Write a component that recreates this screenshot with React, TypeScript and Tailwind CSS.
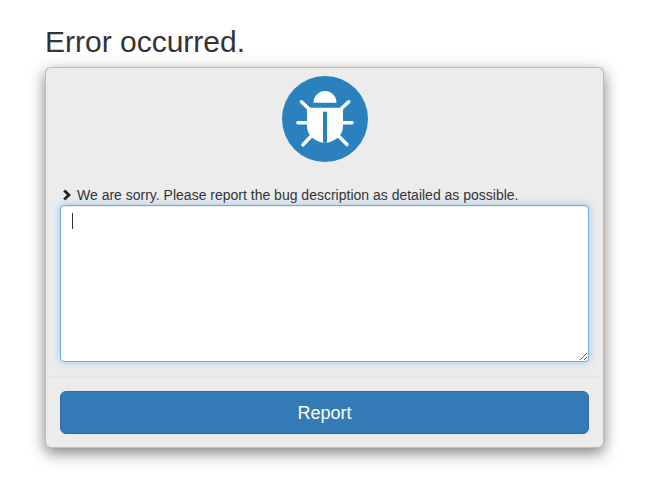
function BugIcon() {
  return (
    <svg width="86" height="86" viewBox="0 0 86 86" className="block">
      <circle cx="43" cy="43" r="43" fill="#2a81bd" />
      <path d="M31.5 26.7a11.5 11.7 0 0 1 23 0z" fill="#fff" />
      <path d="M25 31.7h36v19c0 9-9.500 16-18 16s-18-7-18-16z" fill="#fff" />
      <path d="M41 35.700h4v31h-4z" fill="#2a81bd" />
      <g stroke="#fff" strokeWidth="3.600" strokeLinecap="round" fill="none">
        <path d="M19.500 25.800 28 34" />
        <path d="M66.700 25.800 58 34" />
        <path d="M16 46.700h10" />
        <path d="M70 46.700H60" />
        <path d="M21 68.800l8-8.500" />
        <path d="M65 68.500l-8-8" />
      </g>
    </svg>
  )
}

export default function App() {
  return (
    <div className="w-[648px] h-[500px] bg-white text-[#333] font-['Liberation_Sans',Arial,sans-serif] px-[45px] pt-[20px] overflow-hidden">
      <h1 className="text-[30px] leading-[33px] font-normal h-[47px] pt-[5px]">Error occurred.</h1>
      <div className="w-[559px] h-[381px] bg-[#ececec] border border-black/20 rounded-md shadow-[0_5px_15px_rgba(0,0,0,0.5)]">
        <div className="h-[308px] px-[14px] pt-[8px]">
          <div className="flex justify-center">
            <BugIcon />
          </div>
          <div className="flex items-center mt-[23px] h-[20px] text-[14px] leading-[20px]">
            <svg width="10" height="12" viewBox="0 0 10 12" className="ml-[2px] mr-[5px] shrink-0">
              <path d="M1.200 2.400 3.200 0.500 9 6l-5.800 5.500-2-1.900L5 6z" fill="#222" />
            </svg>
            <span>We are sorry. Please report the bug description as detailed as possible.</span>
          </div>
          <div className="relative mt-[0px]">
            <textarea
              aria-label="Bug description"
              className="block w-[529px] h-[157px] bg-white rounded border border-[#66afe9] outline-none shadow-[inset_0_1px_1px_rgba(0,0,0,0.075),0_0_8px_rgba(102,175,233,0.6)]"
            />
            <span className="absolute left-[12px] top-[8px] w-px h-[16px] bg-[#333]" />
          </div>
        </div>
        <div className="border-t border-[#e5e5e5] px-[14px] pt-[14px]">
          <button
            type="button"
            className="block w-[529px] h-[43px] rounded-md bg-[#337ab7] border border-[#2e6da4] text-white text-[18px] leading-[24px]"
          >
            Report
          </button>
        </div>
      </div>
    </div>
  )
}
